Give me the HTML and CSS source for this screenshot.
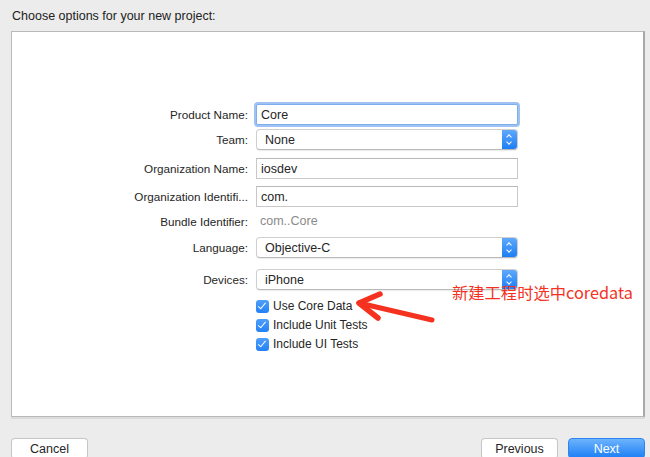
FILE: index.html
```html
<!DOCTYPE html>
<html lang="en">
<head>
    <meta charset="UTF-8">
    <meta name="viewport" content="width=device-width, initial-scale=1.0">
    <title>Choose options for your new project</title>
    <link rel="stylesheet" href="styles.css">
</head>
<body>
    <div class="sheet">
        <div class="sheet-title">Choose options for your new project:</div>

        <div class="panel">
            <form class="options">
                <div class="row row-product">
                    <label for="product">Product Name:</label>
                    <input type="text" id="product" class="field focused" value="Core">
                </div>
                <div class="row row-team">
                    <label>Team:</label>
                    <div class="popup"><span>None</span><i class="stepper"></i></div>
                </div>
                <div class="row row-org">
                    <label for="org">Organization Name:</label>
                    <input type="text" id="org" class="field" value="iosdev">
                </div>
                <div class="row row-orgid">
                    <label for="orgid">Organization Identifi...</label>
                    <input type="text" id="orgid" class="field" value="com.">
                </div>
                <div class="row row-bundle">
                    <label>Bundle Identifier:</label>
                    <span class="static">com..Core</span>
                </div>
                <div class="row row-lang">
                    <label>Language:</label>
                    <div class="popup"><span>Objective-C</span><i class="stepper"></i></div>
                </div>
                <div class="row row-devices">
                    <label>Devices:</label>
                    <div class="popup"><span>iPhone</span><i class="stepper"></i></div>
                </div>
                <div class="row check-row check-first">
                    <span></span>
                    <div class="check"><i class="box"></i>Use Core Data</div>
                </div>
                <div class="row check-row">
                    <span></span>
                    <div class="check"><i class="box"></i>Include Unit Tests</div>
                </div>
                <div class="row check-row">
                    <span></span>
                    <div class="check"><i class="box"></i>Include UI Tests</div>
                </div>
            </form>
        </div>

        <div class="footer">
            <button type="button" class="btn">Cancel</button>
            <div class="footer-right">
                <button type="button" class="btn">Previous</button>
                <button type="button" class="btn btn-primary">Next</button>
            </div>
        </div>
    </div>

    <!-- annotation drawn over the screenshot -->
    <div class="note">新建工程时选中coredata</div>
    <svg class="note-arrow" width="90" height="40" viewBox="0 0 90 40">
        <path d="M5 13 L78 30" stroke="#f4321f" stroke-width="5" stroke-linecap="round" fill="none"/>
        <path d="M26 4 L5 13 L24 28" stroke="#f4321f" stroke-width="5.5" stroke-linecap="round" stroke-linejoin="round" fill="none"/>
    </svg>
</body>
</html>
```

FILE: styles.css
```css
/* General Styles */
body {
    margin: 0;
    padding: 0;
    font-family: "Liberation Sans", Arial, sans-serif;
    background-color: #ececec;
    width: 650px;
    height: 457px;
    overflow: hidden;
    position: relative;
    color: #262626;
}

.sheet {
    display: flex;
    flex-direction: column;
    height: 100%;
}

.sheet-title {
    font-size: 12.5px;
    padding: 9px 12px 0 12px;
    height: 22px;
    color: #222;
    flex-shrink: 0;
}

/* Panel */
.panel {
    margin: 0 5px 0 11px;
    height: 386px;
    flex-shrink: 0;
    background-color: #ffffff;
    border: 1px solid #b9b9b9;
    border-right: 2px solid #a9a9a9;
    box-shadow: 0 2px 0 #dcdcdc;
    box-sizing: border-box;
}

.options {
    display: flex;
    flex-direction: column;
    padding-top: 72px;
}

.row {
    display: grid;
    grid-template-columns: 236px 262px;
    column-gap: 8px;
    align-items: center;
    height: 21px;
    font-size: 12.5px;
}

.row label {
    text-align: right;
    color: #262626;
    white-space: nowrap;
    font-size: 11.7px;
}

.row-team { margin-top: 4px; }
.row-org { margin-top: 8px; }
.row-orgid { margin-top: 7px; }
.row-bundle { margin-top: 5px; height: 18px; }
.row-lang { margin-top: 7px; }
.row-devices { margin-top: 11px; }

/* Text fields */
.field {
    height: 21px;
    width: 262px;
    box-sizing: border-box;
    border: 1px solid #c8c8c8;
    border-top-color: #b8b8b8;
    padding: 0 4px;
    font-family: inherit;
    font-size: 12.5px;
    color: #262626;
    outline: none;
    margin: 0;
}

.field.focused {
    border-color: #7eaef0;
    box-shadow: 0 0 0 2px #9ec3f3;
    border-radius: 2px;
}

.static {
    color: #8a8a8a;
    padding-left: 4px;
}

/* Popup buttons */
.popup {
    position: relative;
    height: 21px;
    box-sizing: border-box;
    border: 1px solid #cfcfcf;
    border-bottom-color: #b9b9b9;
    border-radius: 4px;
    background-color: #fff;
    box-shadow: 0 1px 1px rgba(0, 0, 0, 0.08);
    padding-left: 8px;
    display: flex;
    align-items: center;
}

.stepper {
    position: absolute;
    right: 0;
    top: 0;
    bottom: 0;
    width: 15px;
    border-radius: 0 3px 3px 0;
    background: linear-gradient(#5ea9fb, #1d7ef5);
}

.stepper::before,
.stepper::after {
    content: "";
    position: absolute;
    left: 5px;
    width: 3px;
    height: 3px;
    border-left: 1.3px solid #fff;
    border-top: 1.3px solid #fff;
}

.stepper::before {
    top: 5px;
    transform: rotate(45deg);
}

.stepper::after {
    bottom: 5px;
    transform: rotate(225deg);
}

/* Checkboxes */
.check-row {
    height: 18px;
    margin-top: 1px;
}

.check-first { margin-top: 7px; }

.check {
    display: flex;
    align-items: center;
    gap: 4px;
    color: #262626;
    font-size: 12px;
}

.box {
    width: 13px;
    height: 13px;
    border-radius: 3px;
    background: linear-gradient(#4f9efb, #2381f6);
    position: relative;
}

.box::after {
    content: "";
    position: absolute;
    left: 4px;
    top: 1.5px;
    width: 3px;
    height: 6.5px;
    border-right: 1.8px solid #fff;
    border-bottom: 1.8px solid #fff;
    transform: rotate(40deg);
}

/* Footer */
.footer {
    display: flex;
    flex-shrink: 0;
    justify-content: space-between;
    padding: 21px 5px 0 11px;
}

.footer-right {
    display: flex;
    gap: 10px;
}

.btn {
    width: 77px;
    height: 21px;
    box-sizing: border-box;
    border: 1px solid #c6c6c6;
    border-bottom-color: #adadad;
    border-radius: 4px;
    background-color: #ffffff;
    font-family: inherit;
    font-size: 12.5px;
    color: #262626;
    padding: 0;
}

.btn-primary {
    border-color: #2d84f0;
    background: linear-gradient(#6cb3fc, #1c7ef6);
    color: #ffffff;
}

/* Annotation */
.note {
    position: absolute;
    left: 452px;
    top: 282px;
    font-family: "Noto Sans CJK SC", "Liberation Sans", sans-serif;
    font-size: 16.3px;
    line-height: 20px;
    color: #f4321f;
}

.note-arrow {
    position: absolute;
    left: 354px;
    top: 290px;
}
```
